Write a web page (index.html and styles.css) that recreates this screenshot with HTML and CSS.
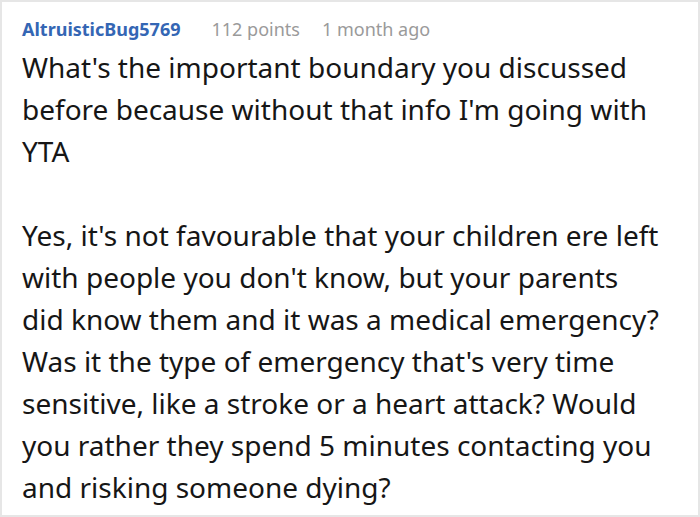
FILE: index.html
```html
<!DOCTYPE html>
<html>
<head>
<meta charset="utf-8">
<link rel="stylesheet" href="styles.css">
</head>
<body>
<div class="comment">
  <div class="meta">
    <span class="author">AltruisticBug5769</span>
    <span class="info points">112 points</span>
    <span class="info">1 month ago</span>
  </div>
  <div class="text">
    <p>What's the important boundary you discussed before because without that info I'm going with YTA</p>
    <p>Yes, it's not favourable that your children ere left with people you don't know, but your parents did&nbsp;know them and it was a medical emergency? Was it the type of emergency that's very time sensitive, like a stroke or a heart attack? Would you rather they spend 5 minutes contacting you and risking someone dying?</p>
  </div>
</div>
</body>
</html>
```
FILE: styles.css
```css
html, body {
  margin: 0;
  padding: 0;
  background: #fff;
}
.comment {
  box-sizing: border-box;
  width: 700px;
  height: 517px;
  border: 2px solid #e6e6e6;
  padding: 15px 20px 0 20px;
  font-family: "Noto Sans", "Open Sans", sans-serif;
  overflow: hidden;
}
.meta {
  display: flex;
  gap: 22px;
  font-size: 18px;
  line-height: 24px;
  margin-bottom: 5px;
}
.author {
  color: #3466b4;
  font-weight: bold;
}
.points {
  margin-left: 9px;
}
.info {
  color: #9a9a9a;
}
.text {
  color: #161616;
  font-size: 28px;
  line-height: 42px;
}
.text p {
  margin: 0 0 42px 0;
}
```
